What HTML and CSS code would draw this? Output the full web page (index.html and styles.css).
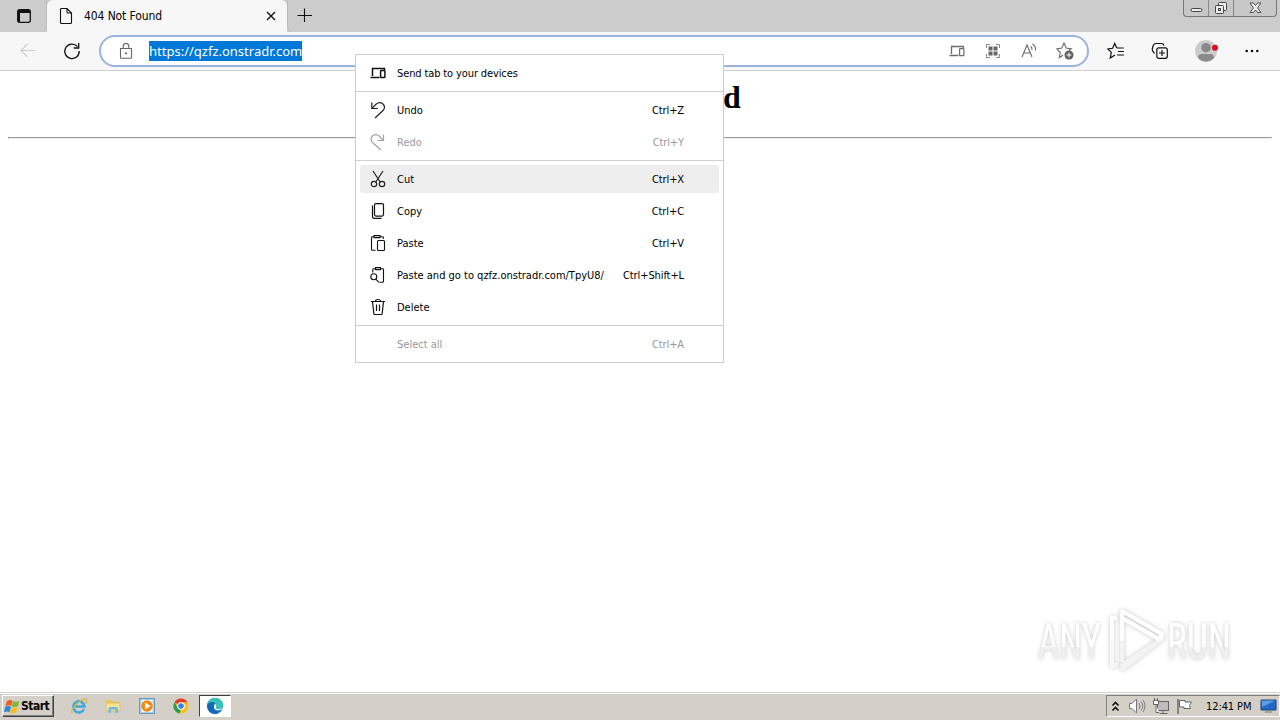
FILE: index.html
```html
<!DOCTYPE html>
<html lang="en">
<head>
    <meta charset="UTF-8">
    <meta name="viewport" content="width=device-width, initial-scale=1.0">
    <title>404 Not Found</title>
    <link rel="stylesheet" href="styles.css">
</head>
<body>
    <header class="tabbar">
        <div class="tab-actions">
            <svg width="16" height="16" viewBox="0 0 16 16"><rect x="1.700" y="1.700" width="12.600" height="12.600" rx="2" fill="none" stroke="#111" stroke-width="1.300"/><path d="M2 2h12v3H2zM2 4.500h2v9.500H2z" fill="#111"/></svg>
        </div>
        <div class="tab">
            <svg width="16" height="16" viewBox="0 0 16 16"><path d="M2.500 1.500q0-1 1-1H9l4.500 4.500v9.500q0 1-1 1h-9q-1 0-1-1zM9 .5V4q0 1 1 1h3.500" fill="none" stroke="#111" stroke-width="1.1"/></svg>
            <span class="tab-title">404 Not Found</span>
            <svg width="10" height="10" viewBox="0 0 10 10"><path d="M1 1l8 8M9 1L1 9" stroke="#111" stroke-width="1.4"/></svg>
        </div>
        <div class="new-tab">
            <svg width="16" height="16" viewBox="0 0 16 16"><path d="M7.500 1.500v13.500M.500 8.500h14.500" stroke="#111" stroke-width="1.1"/></svg>
        </div>
        <div class="window-buttons">
            <span class="min"><svg width="13" height="16" viewBox="0 0 13 16"><rect x="1" y="8.500" width="11" height="3" rx="1.500" fill="#eee" stroke="#444"/></svg></span>
            <span class="max"><svg width="14" height="16" viewBox="0 0 14 16"><rect x="4.500" y="2.500" width="8" height="8" rx="1" fill="#eee" stroke="#444"/><rect x="1.500" y="5.500" width="8" height="8" rx="1" fill="#eee" stroke="#444"/><rect x="4.500" y="8.500" width="2" height="2" fill="#ccc" stroke="#444"/></svg></span>
            <span class="close"><svg width="13" height="16" viewBox="0 0 13 16"><path d="M1 3h3.500l2 2.500L8.500 3H12L8.500 8l3.500 4.500H8.500l-2-2.500-2 2.500H1L4.500 8z" fill="#eee" stroke="#444" stroke-width=".9"/></svg></span>
        </div>
    </header>

    <nav class="toolbar">
        <span class="tool back"><svg width="16" height="16" viewBox="0 0 16 16"><path d="M15.500 7.500H1M7.500 1L1 7.500 7.500 14" fill="none" stroke="#cdcdcd" stroke-width="1.100"/></svg></span>
        <span class="tool"><svg width="18" height="18" viewBox="0 0 18 18"><path d="M14.500 4.700A7.200 7.200 0 1 0 16.200 9M15.700 1v5h-5" fill="none" stroke="#111" stroke-width="1.300"/></svg></span>
        <div class="address">
            <span class="lock"><svg width="14" height="16" viewBox="0 0 14 16"><path d="M1.500 5.500h11v9q0 .7-.7.7H2.200q-.7 0-.7-.7zM4.200 5.500V3.300a2.800 2.800 0 0 1 5.600 0v2.200" fill="none" stroke="#666" stroke-width="1.100"/><circle cx="7" cy="10.300" r="1" fill="#555"/></svg></span>
            <span class="url">https://qzfz.onstradr.com</span>
            <div class="address-icons">
                <span><svg width="16" height="16" viewBox="0 0 16 16"><path d="M2.500 11V3.500h12V5M.5 12.500h9" fill="none" stroke="#6b6b6b" stroke-width="1.300"/><rect x="10.600" y="5.600" width="4.300" height="7" rx=".7" fill="none" stroke="#6b6b6b" stroke-width="1.200"/></svg></span>
                <span><svg width="16" height="16" viewBox="0 0 16 16"><path d="M1.500 5V1.500H5M11 1.500h3.500V5M14.500 11v3.500H11M5 14.500H1.500V11" fill="none" stroke="#888"/><path d="M3.500 3.500h4v4h-4zM8.500 3.500h4v4h-4zM3.500 8.500h4v4h-4zM8.500 8.500h4v4h-4z" fill="#666"/></svg></span>
                <span><svg width="18" height="16" viewBox="0 0 18 16"><path d="M2 14L7 2l5 12M3.800 10h6.400M10.700 3.500q1.600 1.200 1.300 3.500M12.500 1q3.500 2 3 6.500" fill="none" stroke="#6b6b6b" stroke-width="1.100"/></svg></span>
                <span><svg width="18" height="18" viewBox="0 0 18 18"><path d="M7 13.200L3.300 15.500l1-5L.8 6.900l5-.8L8 1l2.200 5.100 5 .8L13 8.500" fill="none" stroke="#666" stroke-width="1.100"/><circle cx="13" cy="13" r="4.500" fill="#606060"/><path d="M10.500 13h5M13 10.500v5" stroke="#fff"/></svg></span>
            </div>
        </div>
        <span class="tool"><svg width="18" height="18" viewBox="0 0 18 18"><path d="M9.800 6L7.700 1.500 5.600 6.300.9 7l3.400 3.400-1 5.600L8 13M9.800 6h7M11 9.500h6M10 13h7" fill="none" stroke="#111" stroke-width="1.200"/></svg></span>
        <span class="tool"><svg width="18" height="18" viewBox="0 0 18 18"><path d="M3.500 11.500Q1 9 1.200 7L2.200 3.500Q3 1.500 5 1.500h5.500q2 0 2.500 2" fill="none" stroke="#111" stroke-width="1.200"/><rect x="5.800" y="5.800" width="10.500" height="10.500" rx="2" fill="none" stroke="#111" stroke-width="1.200"/><path d="M8 11h6M11 8v6" stroke="#111" stroke-width="1.200"/></svg></span>
        <span class="tool profile"><svg width="24" height="24" viewBox="0 0 24 24"><circle cx="12" cy="12" r="11" fill="#ccc"/><circle cx="12" cy="8.700" r="4.800" fill="#8a8a8a"/><path d="M4 18.500q0-3.500 3.500-3.500h9q3.500 0 3.500 3.500-3 4-8 4t-8-4z" fill="#8a8a8a"/><circle cx="21" cy="8.700" r="3" fill="#e00b1c"/></svg></span>
        <span class="tool"><svg width="16" height="16" viewBox="0 0 16 16"><g fill="#111"><circle cx="2.700" cy="8" r="1.300"/><circle cx="8" cy="8" r="1.300"/><circle cx="13.300" cy="8" r="1.300"/></g></svg></span>
    </nav>

    <main class="page">
        <h1>404 Not Found</h1>
        <hr>
        <svg class="watermark" width="210" height="74" viewBox="0 0 210 74">
            <defs>
                <linearGradient id="fade" x1="0" y1="0" x2="0" y2="1">
                    <stop offset=".58" stop-color="#fff"/>
                    <stop offset=".59" stop-color="#efefef"/>
                </linearGradient>
            </defs>
            <g fill="url(#fade)">
                <text x="8" y="58" textLength="63" lengthAdjust="spacingAndGlyphs">ANY</text>
                <text x="137" y="58" textLength="64" lengthAdjust="spacingAndGlyphs">RUN</text>
            </g>
            <g fill="none" stroke-width="4" stroke-linejoin="round">
                <path d="M87 17h-5v48l6-2" stroke="#f8f8f8"/>
                <path d="M92 61V10l40 23v5L93 68l-1-4 38-25-38-22" stroke="#f3f3f3"/>
                <path d="M87 17h-5v22M92 40V10l40 23-3 5-37-21" stroke="#fff"/>
            </g>
        </svg>
    </main>

    <div class="menu">
        <div class="menu-group">
            <div class="item"><svg width="16" height="16" viewBox="0 0 16 16"><path d="M2.500 11V3.500h12V5M.5 12.500h9" fill="none" stroke="#111" stroke-width="1.500"/><rect x="10.600" y="5.600" width="4.300" height="7" rx=".7" fill="none" stroke="#111" stroke-width="1.500"/></svg><span class="send">Send tab to your devices</span></div>
        </div>
        <div class="menu-group">
            <div class="item"><svg width="16" height="18" viewBox="0 0 16 18"><path d="M1.800 1.500v6H8M2 7.300L6 3.300q3.500-3 7-.3 3 3.300 0 6.500L5 17" fill="none" stroke="#222" stroke-width="1.200"/></svg><span>Undo</span><kbd>Ctrl+Z</kbd></div>
            <div class="item disabled"><svg width="16" height="18" viewBox="0 0 16 18"><path d="M13.500 1.500v6H7.500M13.300 7.300L9.500 3.300q-3.500-3-7-.3-3 3.300 0 6.500L11 17" fill="none" stroke="#a5a5a5" stroke-width="1.200"/></svg><span>Redo</span><kbd>Ctrl+Y</kbd></div>
        </div>
        <div class="menu-group">
            <div class="item active"><svg width="16" height="18" viewBox="0 0 16 18"><path d="M3 1l7.500 11.500M13 1L5.500 12.500" fill="none" stroke="#222" stroke-width="1.200"/><circle cx="4" cy="14" r="2.700" fill="none" stroke="#222" stroke-width="1.200"/><circle cx="12" cy="14" r="2.700" fill="none" stroke="#222" stroke-width="1.200"/></svg><span>Cut</span><kbd>Ctrl+X</kbd></div>
            <div class="item"><svg width="16" height="16" viewBox="0 0 16 16"><rect x="4.500" y=".6" width="9" height="12.500" rx="1.500" fill="none" stroke="#111" stroke-width="1.200"/><path d="M2.500 2.500v11q0 1.900 2 1.900h7" fill="none" stroke="#111" stroke-width="1.200"/></svg><span>Copy</span><kbd>Ctrl+C</kbd></div>
            <div class="item"><svg width="16" height="16" viewBox="0 0 16 16"><path d="M4 1.700H2.200q-.7 0-.7.800v12q0 .8.700.8H5.500M10 1.700h2.500q.8 0 .8.800v1.500M4 .600h6v2H4z" fill="none" stroke="#111" stroke-width="1.100"/><rect x="7.500" y="5.500" width="7" height="10" rx="1" fill="none" stroke="#111" stroke-width="1.100"/></svg><span>Paste</span><kbd>Ctrl+V</kbd></div>
            <div class="item"><svg width="16" height="16" viewBox="0 0 16 16"><path d="M5.500 1.700H3.500q-.7 0-.7.800v3M10.500 1.700h2.200q.8 0 .8.800v12q0 .8-.8.800H9.500M5.500.6h5v2h-5zM6 12.300l3 3" fill="none" stroke="#111" stroke-width="1.100"/><circle cx="3.800" cy="9.800" r="3" fill="none" stroke="#111" stroke-width="1.100"/></svg><span>Paste and go to qzfz.onstradr.com/TpyU8/</span><kbd>Ctrl+Shift+L</kbd></div>
            <div class="item"><svg width="16" height="18" viewBox="0 0 16 18"><path d="M1 3.500h14M5.500 3.500q0-2 2.500-2t2.500 2M2.500 3.500l1.300 12q.1 1 1 1h6.400q.9 0 1-1l1.300-12M6.500 6.500v6.500M9.500 6.500v6.500" fill="none" stroke="#111" stroke-width="1.200"/></svg><span>Delete</span></div>
        </div>
        <div class="menu-group">
            <div class="item disabled"><i></i><span>Select all</span><kbd>Ctrl+A</kbd></div>
        </div>
    </div>

    <footer class="taskbar">
        <div class="start">
            <svg width="17" height="17" viewBox="0 0 17 17"><path d="M3 3q3-2 5.500-.3L7.200 8Q5 6.500 1.500 8z" fill="#ef5a24"/><path d="M9.100 3q3 1.400 6.400-.1L14 8.200q-3 1.300-6.300.2z" fill="#83b834"/><path d="M1.300 8.700Q4.500 7.300 7 8.700l-1.500 5.500Q3.200 12.800 0 14z" fill="#2888d8"/><path d="M7.600 9q3 1.300 6.200 0l-1.500 5.400q-3 1.400-6.200.1z" fill="#f6bd22"/></svg>
            <span>Start</span>
        </div>
        <div class="launchers">
            <span><svg width="18" height="18" viewBox="0 0 18 18"><path d="M14 12.300A5.600 5.600 0 1 1 14.500 9.500H5" fill="none" stroke="#3aa9e0" stroke-width="2.500"/><path d="M2.500 16.500q-3-2 3.500-8.500t10-6q1.500 1-.5 5" fill="none" stroke="#e3b53c" stroke-width="1.200"/></svg></span>
            <span><svg width="18" height="18" viewBox="0 0 18 18"><path d="M2 3h5l1 1.500h7V8H2z" fill="#e7c65e"/><path d="M2 6h14v8H2z" fill="#f7e397" stroke="#d6b554" stroke-width=".7"/><path d="M4.500 16v-4.500q0-1.500 1.500-1.500h6.500q1.500 0 1.500 1.500V16h-2.500v-3.500h-4.500V16z" fill="#74b7df"/></svg></span>
            <span><svg width="18" height="18" viewBox="0 0 18 18"><rect x="1.500" y="1.500" width="15" height="15" fill="#a9d0ec" stroke="#6598c0"/><rect x="3.500" y="3" width="11" height="12" fill="#f5fafd"/><circle cx="9" cy="9" r="5.800" fill="#f28a16"/><path d="M7 5.500v7L12.500 9z" fill="#fff"/></svg></span>
            <span><svg width="18" height="18" viewBox="0 0 18 18"><circle cx="9" cy="9" r="7.500" fill="#fbc116"/><path d="M9 9L2.500 5.200A7.500 7.500 0 0 1 15.500 5.300H9z" fill="#e33b2e"/><path d="M2.500 5.200L6 11l3 1.500-1.500 4A7.500 7.500 0 0 1 2.500 5.200z" fill="#2d9d4e"/><circle cx="9" cy="9" r="3.800" fill="#fff"/><circle cx="9" cy="9" r="2.800" fill="#3a7be8"/></svg></span>
            <span class="running"><svg width="18" height="18" viewBox="0 0 18 18"><circle cx="9" cy="9" r="8" fill="#1273c4"/><path d="M1.200 8Q2 1 9 1q7.500 0 8 7 0 4-4.500 4-3 0-2.500-2Q11 8 9 6.500 5 4 1.200 8z" fill="#36c2b4"/><path d="M8.700 7Q11 8 10 10q-.5 2 2.500 2 2.500 0 4.500-1.500-1 2-3 2.700-5 .8-6-2.700-.3-2.500.7-3.500z" fill="#fff"/><path d="M1 9q1-4 5-4 2.500 0 3 1.500-3 1.500-2 5 1 3.500 5 5Q2 18 1 9z" fill="#1469b5"/></svg></span>
        </div>
        <div class="tray">
            <svg width="9" height="13" viewBox="0 0 9 13"><path d="M1.500 5.500l3-3 3 3M1.500 10.500l3-3 3 3" fill="none" stroke="#111" stroke-width="1.600"/></svg>
            <svg class="sound" width="18" height="18" viewBox="0 0 18 18"><path d="M1.500 6.500H4L8.500 2v14L4 11.500H1.500z" fill="#fff" stroke="#777"/><path d="M11 6q2 3 0 6M13 4.500q3.500 4.500 0 9M15 3q4 6 0 12" fill="none" stroke="#777" stroke-width=".9"/></svg>
            <svg class="network" width="18" height="18" viewBox="0 0 18 18"><rect x="5.500" y="4.500" width="11" height="9" fill="#bdbdbd" stroke="#666"/><path d="M7.500 16.500h8M11 14v2" stroke="#666"/><path d="M1.500 3.500h5v4h-5zM2.500 1v2.500M5.500 1v2.500M4 7.500v8h3" fill="#fff" stroke="#666"/></svg>
            <svg class="flag" width="17" height="17" viewBox="0 0 17 17"><path d="M2 1v15" stroke="#777" stroke-width="1.700"/><path d="M3.500 2.500H9V4h6.500l-2 3.500 1 3H8V9H3.500z" fill="#fff" stroke="#666"/></svg>
            <span class="clock">12:41 PM</span>
            <svg class="desktop" width="17" height="16" viewBox="0 0 17 16"><path d="M1 2h15v10H1z" fill="#2368c4" stroke="#16437c"/><path d="M1.500 2.500h14L2 9z" fill="#5b9ce4"/><path d="M5 14h7" stroke="#777"/></svg>
        </div>
    </footer>
</body>
</html>
```
FILE: styles.css
```css
* {
    box-sizing: border-box;
}
body {
    margin: 0;
    height: 720px;
    display: flex;
    flex-direction: column;
    overflow: hidden;
    background-color: #fff;
    color: #000;
    font-family: "DejaVu Sans Condensed", "DejaVu Sans", sans-serif;
    font-stretch: condensed;
    font-size: 11px;
    position: relative;
}
svg {
    display: block;
    flex: none;
}
.tabbar {
    display: flex;
    height: 32px;
    background-color: #ccc;
}
.tab-actions {
    width: 47px;
    padding: 8px 0 0 16px;
    border-right: 1px solid #bbb;
    border-radius: 0 0 6px 0;
}
.tab {
    display: flex;
    align-items: center;
    width: 240px;
    padding: 0 11px;
    background-color: #f7f7f7;
    border-radius: 6px 6px 0 0;
}
.tab-title {
    flex: 1;
    margin-left: 10px;
    font-size: 12px;
    letter-spacing: -0.1px;
}
.new-tab {
    width: 36px;
    padding: 7px 0 0 9px;
    border-left: 1px solid #bbb;
    border-radius: 0 0 0 6px;
}
.window-buttons {
    display: flex;
    width: 94px;
    height: 17px;
    margin-left: auto;
    margin-right: 3px;
    border: 1px solid #777;
    border-top: 0;
    border-radius: 0 0 4px 4px;
    background-color: #c8c8c8;
}
.window-buttons span {
    display: flex;
    justify-content: center;
    width: 25px;
    border-right: 1px solid #888;
}
.window-buttons .close {
    flex: 1;
    border-right: 0;
}
.toolbar {
    display: flex;
    align-items: center;
    height: 39px;
    padding: 0 6px;
    background-color: #f7f7f7;
    border-bottom: 1px solid #cfcfcf;
}
.tool {
    display: flex;
    justify-content: center;
    width: 44px;
    flex: none;
}
.profile {
    width: 48px;
}
.address {
    display: flex;
    align-items: center;
    width: 990px;
    height: 32px;
    margin: 0 5px;
    padding: 0 4px 0 18px;
    background-color: #fff;
    border: 2px solid #9bb4dc;
    border-radius: 16px;
}
.lock {
    width: 30px;
}
.url {
    height: 20px;
    line-height: 20px;
    background-color: #0078d7;
    color: #fff;
    font-family: "Noto Sans", sans-serif;
    font-size: 13px;
    width: 153px;
    white-space: nowrap;
}
.address-icons {
    display: flex;
    margin-left: auto;
}
.address-icons span {
    display: flex;
    justify-content: center;
    align-items: center;
    width: 36px;
}
.page {
    flex: 1;
    padding: 8px;
    font-family: "Liberation Serif", serif;
    position: relative;
}
.page h1 {
    margin: 0 0 21px;
    font-size: 32px;
    line-height: 37px;
    letter-spacing: -0.1px;
    text-align: center;
}
.page hr {
    margin: 0;
}
.watermark {
    position: absolute;
    right: 40px;
    bottom: 17px;
    font-family: Roboto, sans-serif;
    font-size: 50px;
    filter: drop-shadow(0 0 2px rgba(0, 0, 0, 0.22));
}
.menu {
    position: absolute;
    left: 355px;
    top: 54px;
    width: 369px;
    background-color: #fff;
    border: 1px solid #ccc;
}
.menu-group {
    display: flex;
    flex-direction: column;
    gap: 4px;
    padding: 4px;
}
.menu-group + .menu-group {
    border-top: 1px solid #d0d0d0;
}
.item {
    display: flex;
    align-items: center;
    height: 28px;
    padding: 0 35px 0 10px;
    border-radius: 3px;
}
.item span {
    margin-left: 11px;
    white-space: nowrap;
}
.item .send {
    letter-spacing: -0.12px;
}
.item i {
    width: 16px;
}
.item kbd {
    margin-left: auto;
    font-family: inherit;
    letter-spacing: -0.1px;
}
.active {
    background-color: #eee;
}
.disabled {
    color: #999;
}
.taskbar {
    display: flex;
    align-items: center;
    height: 28px;
    padding-bottom: 1px;
    background-color: #d4d0c8;
    border-top: 1px solid #d4d0c8;
    box-shadow: inset 0 1px #fff;
}
.start {
    display: flex;
    align-items: center;
    width: 52px;
    height: 22px;
    margin-left: 2px;
    padding-left: 1px;
    border: 1px solid;
    border-color: #fff #404040 #404040 #fff;
    box-shadow: inset -1px -1px #808080;
    font-size: 12px;
    font-weight: bold;
    letter-spacing: -0.5px;
}
.launchers {
    display: flex;
    margin-left: 8px;
}
.launchers span {
    display: flex;
    justify-content: center;
    align-items: center;
    width: 34px;
    height: 22px;
}
.launchers .running {
    width: 32px;
    margin-left: 1px;
    background-color: #fff;
    border: 1px solid;
    border-color: #404040 #fff #fff #404040;
}
.tray {
    display: flex;
    align-items: center;
    width: 174px;
    height: 22px;
    margin-left: auto;
    padding-left: 4px;
    border: 1px solid;
    border-color: #808080 #fff #fff #808080;
}
.sound {
    margin-left: 8px;
}
.network {
    margin-left: 6px;
}
.flag {
    margin-left: 6px;
}
.clock {
    width: 54px;
    margin-left: 13px;
    white-space: nowrap;
    letter-spacing: -0.1px;
}
```
